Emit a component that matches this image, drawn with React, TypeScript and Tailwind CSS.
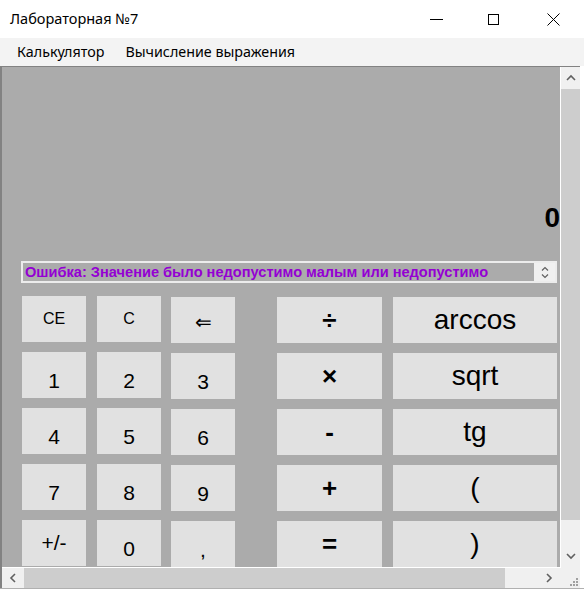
import React from "react";

type Btn = { label: string; kind: "small" | "arrow" | "digit" | "sign" | "op" | "fn" };

const columns: { width: string; offset: string; items: Btn[] }[] = [
  {
    width: "w-[64px]",
    offset: "",
    items: [
      { label: "CE", kind: "small" },
      { label: "1", kind: "digit" },
      { label: "4", kind: "digit" },
      { label: "7", kind: "digit" },
      { label: "+/-", kind: "sign" },
    ],
  },
  {
    width: "w-[64px]",
    offset: "",
    items: [
      { label: "C", kind: "small" },
      { label: "2", kind: "digit" },
      { label: "5", kind: "digit" },
      { label: "8", kind: "digit" },
      { label: "0", kind: "digit" },
    ],
  },
  {
    width: "w-[64px]",
    offset: "mt-[1px]",
    items: [
      { label: "⇐", kind: "arrow" },
      { label: "3", kind: "digit" },
      { label: "6", kind: "digit" },
      { label: "9", kind: "digit" },
      { label: ",", kind: "digit" },
    ],
  },
  {
    width: "w-[105px]",
    offset: "mt-[1px]",
    items: [
      { label: "÷", kind: "op" },
      { label: "×", kind: "op" },
      { label: "-", kind: "op" },
      { label: "+", kind: "op" },
      { label: "=", kind: "op" },
    ],
  },
  {
    width: "w-[164px]",
    offset: "mt-[1px]",
    items: [
      { label: "arccos", kind: "fn" },
      { label: "sqrt", kind: "fn" },
      { label: "tg", kind: "fn" },
      { label: "(", kind: "fn" },
      { label: ")", kind: "fn" },
    ],
  },
];

const textClass: Record<Btn["kind"], string> = {
  small: "text-[16px]",
  arrow: "text-[20px] pt-[4px]",
  digit: "text-[21px] leading-[24px] pt-[12px]",
  sign: "text-[21px]",
  op: "text-[26px] font-bold",
  fn: "text-[28px]",
};

function Chevron({ dir, size = 8 }: { dir: "up" | "down" | "left" | "right"; size?: number }) {
  const pts = {
    up: "1,6 5,2 9,6",
    down: "1,2 5,6 9,2",
    left: "6,1 2,5 6,9",
    right: "2,1 6,5 2,9",
  }[dir];
  const vb = dir === "up" || dir === "down" ? "0 0 10 8" : "0 0 8 10";
  const w = dir === "up" || dir === "down" ? size + 2 : size;
  const h = dir === "up" || dir === "down" ? size : size + 2;
  return (
    <svg width={w} height={h} viewBox={vb}>
      <polyline points={pts} fill="none" stroke="#606060" strokeWidth="1.6" />
    </svg>
  );
}

export default function App() {
  return (
    <div className="w-[584px] h-[592px] bg-white flex flex-col overflow-hidden font-['Noto_Sans',sans-serif] text-black">
      {/* title bar */}
      <div className="h-[38px] flex items-center">
        <div className="pl-[10px] text-[14.5px] flex-1">Лабораторная №7</div>
        <div className="w-[58px] h-full flex items-center justify-center">
          <div className="w-[13px] h-px bg-black" />
        </div>
        <div className="w-[57px] h-full flex items-center justify-center">
          <div className="w-[11px] h-[11px] border border-black" />
        </div>
        <div className="w-[62px] h-full flex items-center justify-center">
          <svg width="13" height="13" viewBox="0 0 13 13">
            <path d="M0.5 0.5 L12.5 12.5 M12.5 0.5 L0.5 12.5" stroke="black" strokeWidth="1" />
          </svg>
        </div>
      </div>

      {/* menu */}
      <div className="h-[28px] bg-[#f3f3f3] flex items-center gap-[21px] pl-[17px] text-[14.3px]">
        <span>Калькулятор</span>
        <span>Вычисление выражения</span>
      </div>

      {/* client area */}
      <div className="h-[522px] w-[580px] border-t border-l-2 border-[#828282] flex flex-col font-['Liberation_Sans',Arial,sans-serif]">
        <div className="flex">
          <div className="w-[559px] h-[501px] bg-[#ababab] border-r border-b border-white overflow-hidden flex flex-col">
            <div className="h-[195px] flex justify-end">
              <div className="mt-[135px] text-[28px] leading-[32px] font-bold">0</div>
            </div>

            <div className="ml-[19px] w-[536px] h-[22px] border-2 border-[#ececec] flex">
              <div className="flex-1 pl-[2px] text-[14.6px] font-bold text-[#9400d3] leading-[18px] whitespace-nowrap overflow-hidden">
                Ошибка: Значение было недопустимо малым или недопустимо
              </div>
              <div className="w-[21px] bg-[#f0f0f0] flex flex-col items-center justify-center gap-[1px]">
                <Chevron dir="up" size={6} />
                <Chevron dir="down" size={6} />
              </div>
            </div>

            <div className="mt-[13px] ml-[20px] flex">
              {columns.map((col, ci) => (
                <div
                  key={ci}
                  className={`${col.width} ${col.offset} flex flex-col gap-[10px] ${ci === 1 ? "ml-[11px]" : ci === 2 ? "ml-[10px]" : ci === 3 ? "ml-[42px]" : ci === 4 ? "ml-[11px]" : ""}`}
                >
                  {col.items.map((b) => (
                    <div
                      key={b.label}
                      className={`h-[46px] shrink-0 bg-[#e1e1e1] flex items-center justify-center ${textClass[b.kind]}`}
                    >
                      {b.label}
                    </div>
                  ))}
                </div>
              ))}
            </div>
          </div>

          {/* vertical scrollbar */}
          <div className="w-[19px] h-[501px] bg-[#f0f0f0] flex flex-col">
            <div className="h-[22px] flex items-center justify-center">
              <Chevron dir="up" />
            </div>
            <div className="h-[431px] bg-[#cdcdcd]" />
            <div className="flex-1 flex items-end justify-center pb-[8px]">
              <Chevron dir="down" />
            </div>
          </div>
        </div>

        <div className="flex h-[20px]">
          {/* horizontal scrollbar */}
          <div className="w-[559px] h-full bg-[#f0f0f0] flex">
            <div className="w-[22px] flex items-center justify-center">
              <Chevron dir="left" />
            </div>
            <div className="w-[481px] bg-[#cdcdcd]" />
            <div className="flex-1 flex items-center justify-end pr-[8px]">
              <Chevron dir="right" />
            </div>
          </div>
          <div className="w-[19px] h-full bg-[#f0f0f0] relative">
            <div className="absolute right-[2px] bottom-[2px] grid grid-cols-3 gap-[1px]">
              <span />
              <span />
              <span className="w-[2px] h-[2px] bg-[#a0a0a0]" />
              <span />
              <span className="w-[2px] h-[2px] bg-[#a0a0a0]" />
              <span className="w-[2px] h-[2px] bg-[#a0a0a0]" />
              <span className="w-[2px] h-[2px] bg-[#a0a0a0]" />
              <span className="w-[2px] h-[2px] bg-[#a0a0a0]" />
              <span className="w-[2px] h-[2px] bg-[#a0a0a0]" />
            </div>
          </div>
        </div>
      </div>

      <div className="h-[4px] border-t border-[#b0b0b0] bg-white" />
    </div>
  );
}
